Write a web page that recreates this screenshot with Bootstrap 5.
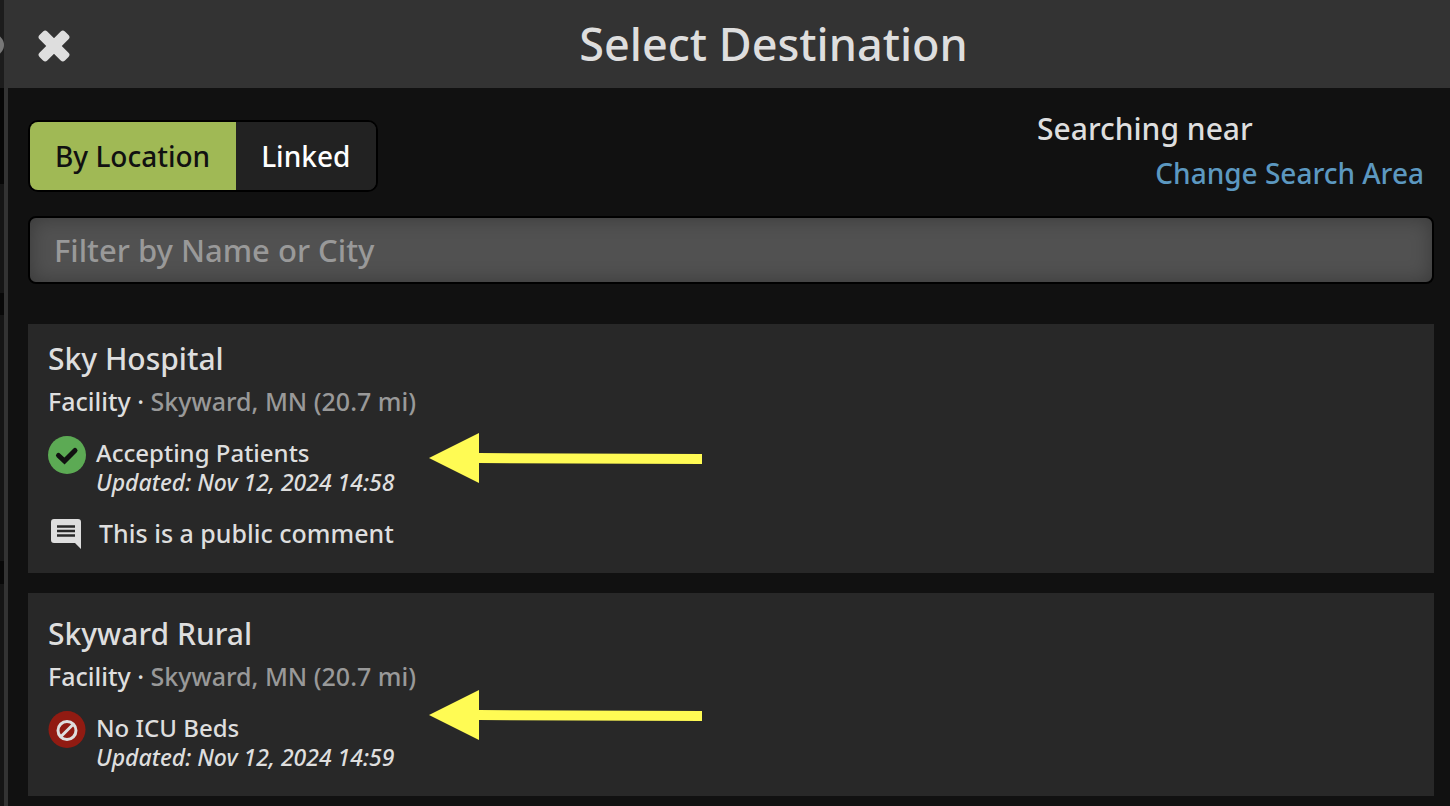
<!DOCTYPE html>
<html lang="en">
<head>
<meta charset="utf-8">
<meta name="viewport" content="width=device-width, initial-scale=1">
<title>Select Destination</title>
<link href="https://cdn.jsdelivr.net/npm/bootstrap@5.3.0/dist/css/bootstrap.min.css" rel="stylesheet">
<style>
  body { background: #111; color: #dedede; font-family: "Noto Sans", "Open Sans", sans-serif; font-weight: 500; }
  .backdrop-edge { flex: 0 0 4px; overflow: hidden; position: relative; background: linear-gradient(#1c1c1c 88px, #060606 88px 184px, #151515 184px 293px, #080808 293px 315px, #151515 315px 561px, #080808 561px 584px, #151515 584px); }
  .edge-knob { position: absolute; top: 34px; right: 0; width: 22px; height: 22px; border-radius: 50%; background: #777; }
  .sheet { border-left: 4px solid #333; background: #111; min-width: 0; }
  .sheet-head { background: #333; height: 88px; }
  .close-btn { width: 89px; padding: 3px 0 0 30px; border: 0; background: none; text-align: left; line-height: 0; }
  .sheet-title { font-size: 45px; line-height: 56px; font-weight: 500; margin: 0; }
  .sheet-body { padding: 24px 16px 8px 20px; }
  .tabs { border: 2px solid #000; border-radius: 10px; overflow: hidden; margin-top: 8px; height: 72px; background: #222; }
  .tabs button { border: 0; padding: 0 26px 0 25px; font-size: 28px; line-height: 40px; background: #222; color: #fff; font-weight: 500; }
  .tabs button.active { background: #a0b955; color: #111; }
  .area { width: 387px; margin-right: 10px; }
  .area-label { font-size: 30px; line-height: 34px; }
  .area a { font-size: 28px; line-height: 36px; margin-top: 9px; color: #5c98c0; text-decoration: none; }
  .filter { height: 68px; margin-top: 24px; padding: 0 24px; font-size: 31px; font-weight: 500; border: 2px solid #000; border-radius: 8px; background: #515151; color: #ddd; box-shadow: inset 0 0 20px rgba(0,0,0,.3); }
  .filter:focus { background: #515151; color: #ddd; }
  .filter::placeholder { color: #999; opacity: 1; }
  .places { margin-top: 40px; gap: 20px; }
  .place { background: #282828; padding: 15px 20px 24px; position: relative; }
  .place.plain { padding: 21px 20px 28px; }
  .place h2 { font-size: 30px; line-height: 40px; font-weight: 500; margin: 0; }
  .place-meta { font-size: 25px; line-height: 32px; margin-top: 6px; color: #999; }
  .place-meta span { color: #dedede; }
  .status { gap: 10px; margin-top: 18px; }
  .status svg { flex: none; margin-top: 1px; }
  .status-name { font-size: 24px; line-height: 36px; }
  .status-time { font-size: 23px; line-height: 22px; font-style: italic; }
  .remark { gap: 18px; font-size: 25px; line-height: 32px; margin-top: 24px; padding-left: 3px; }
  .pointer { position: absolute; left: 401px; top: 109px; }
  .plain .pointer { top: 97px; }
</style>
</head>
<body>
<div class="d-flex min-vh-100">
  <div class="backdrop-edge"><div class="edge-knob"></div></div>
  <main class="sheet flex-grow-1">
    <header class="sheet-head d-flex align-items-center">
      <button class="close-btn" type="button" aria-label="Close">
        <svg width="32" height="32" viewBox="0 0 32 32" fill="#dedede"><rect x="-2" y="10.5" width="36" height="11" rx="3" transform="rotate(45 16 16)"/><rect x="-2" y="10.5" width="36" height="11" rx="3" transform="rotate(-45 16 16)"/></svg>
      </button>
      <h1 class="sheet-title flex-grow-1 text-center">Select Destination</h1>
    </header>
    <div class="sheet-body">
      <div class="d-flex justify-content-between align-items-start">
        <div class="tabs d-flex" role="group" aria-label="Search mode">
          <button type="button" class="active">By Location</button>
          <button type="button">Linked</button>
        </div>
        <div class="area d-flex flex-column">
          <span class="area-label">Searching near</span>
          <a href="#" class="align-self-end">Change Search Area</a>
        </div>
      </div>
      <input class="filter form-control" type="text" placeholder="Filter by Name or City" aria-label="Filter by Name or City">
      <div class="places d-flex flex-column">
        <article class="place">
          <h2>Sky Hospital</h2>
          <div class="place-meta"><span>Facility ·</span> Skyward, MN (20.7 mi)</div>
          <div class="status d-flex">
            <svg width="38" height="38" viewBox="0 0 38 38"><circle cx="19" cy="19" r="19" fill="#5caa54"/><path d="m10.5 19.5 6 5.5L27 14.500" fill="none" stroke="#111" stroke-width="5" stroke-linecap="round"/></svg>
            <div>
              <div class="status-name">Accepting Patients</div>
              <div class="status-time">Updated: Nov 12, 2024 14:58</div>
            </div>
          </div>
          <div class="remark d-flex align-items-end">
            <svg width="30" height="30" viewBox="0 0 30 30"><path d="M3 0h24q3 0 3 3v27l-6-6H3q-3 0-3-3V3q0-3 3-3z" fill="#dedede"/><path d="M6 7.500h18M6 12h18M6 16.500h18" stroke="#282828" stroke-width="2.600"/></svg>
            <span>This is a public comment</span>
          </div>
          <svg class="pointer" width="274" height="52" viewBox="0 0 274 52"><path d="M0 25 50 0v20l223 1v10L50 30v20z" fill="#fffb54"/></svg>
        </article>
        <article class="place plain">
          <h2>Skyward Rural</h2>
          <div class="place-meta"><span>Facility ·</span> Skyward, MN (20.7 mi)</div>
          <div class="status d-flex">
            <svg width="38" height="38" viewBox="0 0 38 38"><circle cx="19" cy="18.500" r="18.500" fill="#911b12"/><circle cx="19" cy="19.500" r="9" fill="none" stroke="#dedede" stroke-width="3"/><path d="m13 25.500 12-12" stroke="#dedede" stroke-width="3"/></svg>
            <div>
              <div class="status-name">No ICU Beds</div>
              <div class="status-time">Updated: Nov 12, 2024 14:59</div>
            </div>
          </div>
          <svg class="pointer" width="274" height="52" viewBox="0 0 274 52"><path d="M0 25 50 0v20l223 1v10L50 30v20z" fill="#fffb54"/></svg>
        </article>
      </div>
    </div>
  </main>
</div>
<script src="https://cdn.jsdelivr.net/npm/bootstrap@5.3.0/dist/js/bootstrap.bundle.min.js"></script>
</body>
</html>
